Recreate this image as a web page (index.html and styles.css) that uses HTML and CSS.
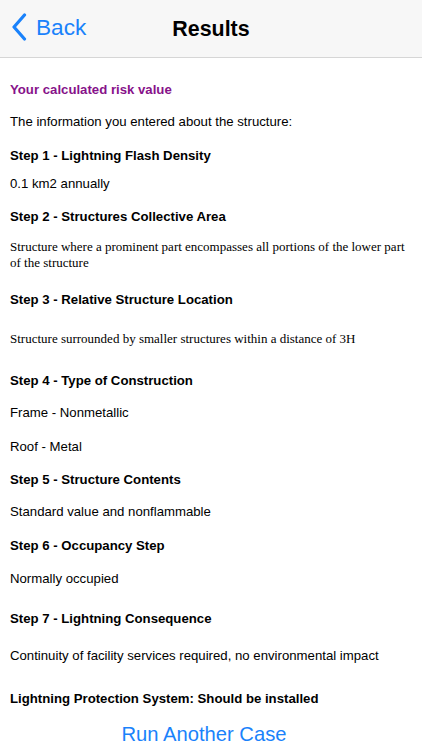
FILE: index.html
```html
<!DOCTYPE html>
<html>
<head>
<meta charset="utf-8">
<link rel="stylesheet" href="styles.css">
</head>
<body>
<header class="navbar">
  <a class="back">
    <svg class="chevron" width="16" height="28" viewBox="0 0 16 28"><path d="M13.5 2 L3 14 L13.5 26" fill="none" stroke="#1a82fb" stroke-width="3.2" stroke-linecap="round" stroke-linejoin="round"/></svg>
    <span>Back</span>
  </a>
  <h1 class="title">Results</h1>
</header>
<main class="content">
  <p class="risk">Your calculated risk value</p>
  <p class="text g16">The information you entered about the structure:</p>
  <p class="step g18">Step 1 - Lightning Flash Density</p>
  <p class="text g12">0.1 km2 annually</p>
  <p class="step g17">Step 2 - Structures Collective Area</p>
  <p class="serif g14">Structure where a prominent part encompasses all portions of the lower part of the structure</p>
  <p class="step g21">Step 3 - Relative Structure Location</p>
  <p class="serif g23">Structure surrounded by smaller structures within a distance of 3H</p>
  <p class="step g26">Step 4 - Type of Construction</p>
  <p class="text g16">Frame - Nonmetallic</p>
  <p class="text g18">Roof - Metal</p>
  <p class="step g17">Step 5 - Structure Contents</p>
  <p class="text g16">Standard value and nonflammable</p>
  <p class="step g18">Step 6 - Occupancy Step</p>
  <p class="text g17">Normally occupied</p>
  <p class="step g24">Step 7 - Lightning Consequence</p>
  <p class="text g21">Continuity of facility services required, no environmental impact</p>
  <p class="step g27">Lightning Protection System: Should be installed</p>
  <div class="action"><a class="run">Run Another Case</a></div>
</main>
</body>
</html>
```
FILE: styles.css
```css
* { box-sizing: border-box; }
html, body { margin: 0; padding: 0; background: #fff; }
body { width: 422px; height: 750px; overflow: hidden; font-family: "Liberation Sans", Arial, sans-serif; color: #000; }
.navbar {
  height: 58px;
  background: #f7f7f7;
  border-bottom: 1px solid #d6d6d6;
  position: relative;
  display: flex;
  align-items: center;
  justify-content: center;
}
.back {
  position: absolute;
  left: 11px;
  top: 13px;
  display: flex;
  align-items: center;
  color: #1a82fb;
  font-size: 22.6px;
}
.back span { margin-left: 9px; padding-top: 2px; }
.chevron { display: block; }
.title { margin: 0; font-size: 21.4px; font-weight: bold; line-height: 26px; }
.content { padding: 0 4px 0 10px; }
.content p { margin: 0; font-size: 13.2px; line-height: 16px; }
.risk { color: #87128a; font-weight: bold; margin-top: 24px !important; }
.step { font-weight: bold; }
.serif { font-family: "Liberation Serif", "Times New Roman", serif; font-size: 13px !important; }
.g12 { margin-top: 12px !important; }
.g14 { margin-top: 14px !important; }
.g16 { margin-top: 16px !important; }
.g17 { margin-top: 17px !important; }
.g18 { margin-top: 18px !important; }
.g21 { margin-top: 21px !important; }
.g23 { margin-top: 23px !important; }
.g24 { margin-top: 24px !important; }
.g26 { margin-top: 26px !important; }
.g27 { margin-top: 27px !important; }
.action { text-align: center; margin-top: 14px; padding-right: 20px; }
.run { color: #1a82fb; font-size: 20.2px; line-height: 26px; }
```
